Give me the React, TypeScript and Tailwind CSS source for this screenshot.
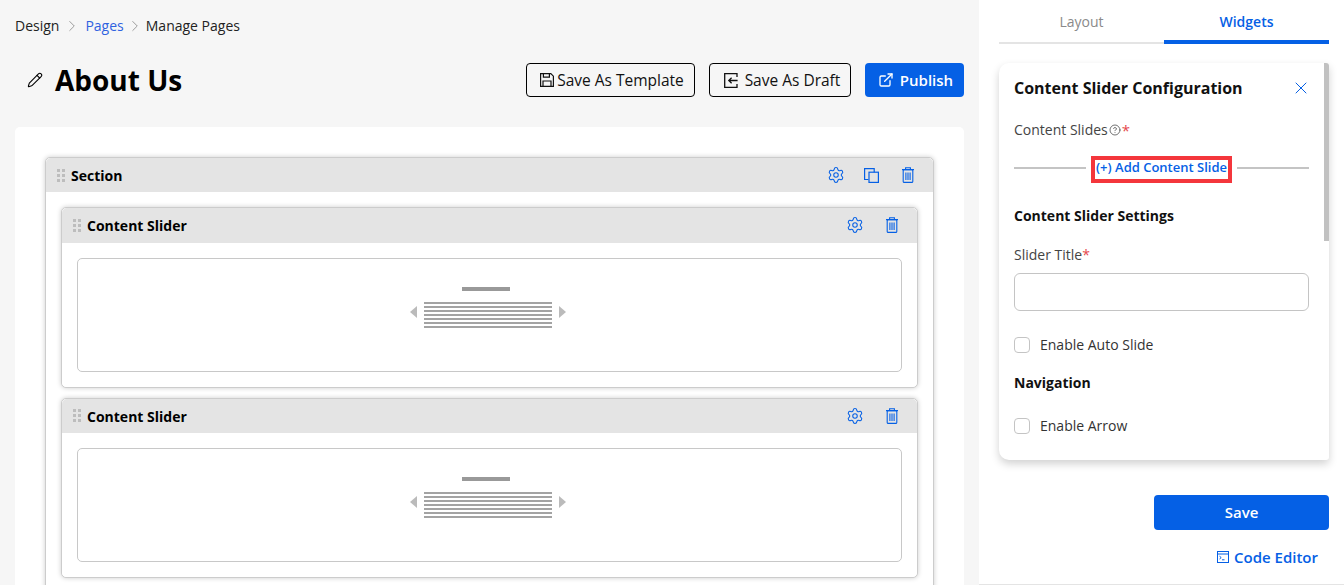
import React from 'react';
import { ChevronRight, Pencil, ExternalLink, Settings, X, CircleHelp } from 'lucide-react';

function Grip() {
  return (
    <div className="grid w-2 grid-cols-2 gap-x-[2px] gap-y-[2px]">
      {[0, 1, 2, 3, 4, 5].map(i => (
        <div key={i} className="h-[3px] w-[3px] bg-[#bdbdbd]" />
      ))}
    </div>
  );
}

function TrashIcon() {
  return (
    <svg width="12" height="16" viewBox="0 0 12 16" fill="none" stroke="currentColor" strokeWidth="1.1">
      <path d="M0 2.6h12M3.6 2.6V.7h4.8v1.9" />
      <rect x="1.2" y="2.6" width="9.6" height="12.8" rx="1" />
      <path d="M3.9 5.5v7.5M6 5.5v7.5M8.1 5.5v7.5" />
    </svg>
  );
}

function CopyIcon() {
  return (
    <svg width="15" height="15" viewBox="0 0 15 15" fill="none" stroke="currentColor" strokeWidth="1.2">
      <path d="M4.5 11.5H.6V.6h9.6v3.6" />
      <rect x="5" y="4.2" width="9.4" height="10.2" />
    </svg>
  );
}

function FloppyIcon() {
  return (
    <svg width="14" height="14" viewBox="0 0 14 14" fill="none" stroke="currentColor" strokeWidth="1.2">
      <path d="M.6.6h10.2l2.6 2.6v10.2H.6z" />
      <path d="M3.4.6v3.6h6V.6M3 13.4V8h8v5.4" />
    </svg>
  );
}

function DraftIcon() {
  return (
    <svg width="14" height="15" viewBox="0 0 14 15" fill="none" stroke="currentColor" strokeWidth="1.3">
      <path d="M13 4V.7H.7v13.6H13V11" />
      <path d="M13.6 7.5H5M7.6 4.8 4.8 7.5l2.8 2.7" />
    </svg>
  );
}

function TerminalIcon() {
  return (
    <svg width="12" height="12" viewBox="0 0 12 12" fill="none" stroke="currentColor" strokeWidth="1">
      <rect x="0.5" y="0.5" width="11" height="11" />
      <path d="M.5 3h11" />
      <path d="M2.5 5.2 4.2 6.6 2.5 8M5 8.8h2.5" />
    </svg>
  );
}

function Placeholder() {
  return (
    <div className="flex h-[114px] flex-col items-center rounded-[5px] border border-[#c8c8c8] bg-white pr-[3px] pt-[28px]">
      <div className="mr-[4px] h-1 w-12 bg-[#999999]" />
      <div className="mt-[11px] flex items-center gap-[7px]">
        <div className="h-0 w-0 -translate-y-[3px] border-y-[6px] border-r-[7px] border-y-transparent border-r-[#bbbbbb]" />
        <div className="flex w-32 flex-col gap-[2px]">
          {[0, 1, 2, 3, 4, 5, 6].map(i => (
            <div key={i} className="h-[2px] bg-[#a3a3a3]" />
          ))}
        </div>
        <div className="h-0 w-0 -translate-y-[3px] border-y-[6px] border-l-[7px] border-y-transparent border-l-[#bbbbbb]" />
      </div>
    </div>
  );
}

function WidgetCard() {
  return (
    <div className="rounded-[5px] border border-[#cccccc] bg-white shadow-[0_0_5px_rgba(0,0,0,0.2)]">
      <div className="flex h-[34.5px] items-center rounded-t-[5px] bg-[#e4e4e4] pl-[11px] pr-[19px]">
        <Grip />
        <span className="ml-[6px] pt-[2px] text-sm font-bold text-black">Content Slider</span>
        <div className="ml-auto flex items-center gap-[22px] text-[#0560e5]">
          <Settings className="h-[18px] w-[18px]" strokeWidth={1.4} />
          <TrashIcon />
        </div>
      </div>
      <div className="rounded-b-[5px] bg-white p-[15px]">
        <Placeholder />
      </div>
    </div>
  );
}

function Check({ label }: { label: string }) {
  return (
    <label className="flex items-center gap-[10px] text-sm text-[#333333]">
      <span className="h-4 w-4 rounded-[4px] border border-[#c4c4c4] bg-white" />
      {label}
    </label>
  );
}

export default function App() {
  return (
    <div className="flex h-[585px] w-[1344px] overflow-hidden bg-white font-['Open_Sans',sans-serif]">
      {/* Left canvas */}
      <div className="w-[979px] shrink-0 bg-[#f6f6f6] pl-[15px] pr-[15px]">
        <div className="flex h-[52px] items-center text-sm text-[#222222]">
          <span>Design</span>
          <ChevronRight className="mx-[4px] h-[18px] w-[18px] text-[#888888]" strokeWidth={1.1} />
          <span className="text-[#2f62e0]">Pages</span>
          <ChevronRight className="mx-[2px] h-[18px] w-[18px] text-[#888888]" strokeWidth={1.1} />
          <span>Manage Pages</span>
        </div>
        <div className="flex h-[56px] items-center">
          <Pencil className="ml-3 h-4 w-4 text-black" strokeWidth={1.6} />
          <h1 className="ml-[12px] text-[28px] font-bold leading-none text-black">About Us</h1>
          <div className="ml-auto flex items-center text-[15.5px] font-medium">
            <button className="flex h-[34px] w-[169px] items-center justify-center gap-[3px] rounded-[4px] border border-black pl-[3px] text-[#111111]">
              <FloppyIcon />
              <span className="pt-[2px]">Save As Template</span>
            </button>
            <button className="ml-[14px] flex h-[34px] w-[142px] items-center justify-center gap-[7px] rounded-[4px] border border-black pl-[4px] text-[#111111]">
              <DraftIcon />
              <span className="pt-[2px]">Save As Draft</span>
            </button>
            <button className="ml-[14px] flex h-[34px] w-[99px] items-center justify-center gap-[6px] rounded-[4px] bg-[#0560e5] pl-[2px] text-[15px] font-semibold text-white">
              <ExternalLink className="h-4 w-4" strokeWidth={2} />
              Publish
            </button>
          </div>
        </div>
        <div className="mt-[19px] h-[600px] rounded-t-[5px] bg-white px-[30px] pt-[30px]">
          <div className="rounded-[5px] border border-[#cccccc] bg-white shadow-[0_0_5px_rgba(0,0,0,0.2)]">
            <div className="flex h-[34px] items-center rounded-t-[5px] bg-[#e4e4e4] pl-[11px] pr-[19px]">
              <Grip />
              <span className="ml-[6px] pt-[2px] text-sm font-bold text-black">Section</span>
              <div className="ml-auto flex items-center text-[#0560e5]">
                <Settings className="h-[18px] w-[18px]" strokeWidth={1.4} />
                <span className="ml-[19px]"><CopyIcon /></span>
                <span className="ml-[23px]"><TrashIcon /></span>
              </div>
            </div>
            <div className="flex flex-col gap-[10px] rounded-b-[5px] bg-white p-[15px]">
              <WidgetCard />
              <WidgetCard />
            </div>
          </div>
        </div>
      </div>

      {/* Right config panel */}
      <div className="relative flex-1 border-b border-[#e4e4e4] pl-5 pr-[15px]">
        <div className="flex h-11 border-b-2 border-[#e4e4e4] text-sm">
          <div className="flex w-[165px] items-center justify-center pt-[2px] text-[#8a8a8a]">Layout</div>
          <div className="-mb-[2px] flex w-[165px] items-center justify-center border-b-[4px] border-[#0560e5] pt-[4px] font-semibold text-[#0560e5]">Widgets</div>
        </div>
        <div className="relative mt-[19px] h-[397px] overflow-hidden rounded-l-[10px] rounded-r-[3px] bg-white px-[15px] shadow-[0_4px_8px_rgba(0,0,0,0.18)]">
          <div className="absolute right-0 top-0 h-[178px] w-[5px] bg-[#c1c1c1]" />
          <div className="flex h-[50px] items-center justify-between pr-[3px]">
            <span className="text-base font-bold text-[#111111]">Content Slider Configuration</span>
            <X className="h-5 w-5 text-[#0560e5]" strokeWidth={1.2} />
          </div>
          <div className="mt-[7px] flex items-center text-sm text-[#444444]">
            Content Slides
            <CircleHelp className="ml-[1px] h-3 w-3" strokeWidth={1.5} />
            <span className="ml-[1px] text-[15px] leading-none text-[#e5484d]">*</span>
          </div>
          <div className="mt-[16px] flex items-start pr-[5px]">
            <div className="mt-[11px] h-[2px] flex-1 bg-[#c4c4c4]" />
            <span className="mx-[5px] border-4 border-[#f4363c] px-[1px] pb-[5px] text-[13px] font-semibold leading-[14px] text-[#0560e5]">(+) Add Content Slide</span>
            <div className="mt-[11px] h-[2px] flex-1 bg-[#c4c4c4]" />
          </div>
          <div className="mt-[23px] text-sm font-bold text-[#111111]">Content Slider Settings</div>
          <div className="mt-[19px] text-sm text-[#444444]">Slider Title<span className="text-[#e5484d]">*</span></div>
          <div className="mr-[5px] mt-[8px] h-[38px] rounded-[6px] border border-[#c4c4c4] bg-white" />
          <div className="mt-[24px]"><Check label="Enable Auto Slide" /></div>
          <div className="mt-[18px] text-sm font-bold text-[#111111]">Navigation</div>
          <div className="mt-[23px]"><Check label="Enable Arrow" /></div>
        </div>
        <button className="ml-auto mt-[35px] block h-[35px] w-[175px] rounded-[4px] bg-[#0560e5] text-[15px] font-semibold text-white">Save</button>
        <div className="mt-[16px] flex items-center justify-end gap-[5px] pr-[11px] text-[15px] font-semibold text-[#0560e5]">
          <TerminalIcon />
          Code Editor
        </div>
      </div>
    </div>
  );
}
